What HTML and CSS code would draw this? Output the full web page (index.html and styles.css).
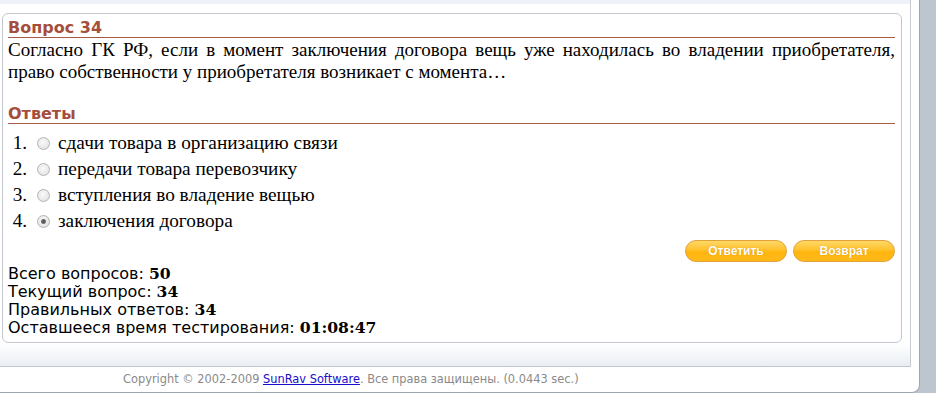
FILE: index.html
```html
<!DOCTYPE html>
<html lang="ru">
<head>
    <meta charset="UTF-8">
    <title>Тестирование</title>
    <link rel="stylesheet" href="styles.css">
</head>
<body>
    <div class="page">
        <div class="panel">
            <div class="card">
                <h2 class="title">Вопрос 34</h2>
                <p class="question">Согласно ГК РФ, если в момент заключения договора вещь уже находилась во владении приобретателя, право собственности у приобретателя возникает с момента…</p>

                <h2 class="title answers-title">Ответы</h2>
                <ol class="answers">
                    <li><input type="radio" name="answer" id="a1"><label for="a1">сдачи товара в организацию связи</label></li>
                    <li><input type="radio" name="answer" id="a2"><label for="a2">передачи товара перевозчику</label></li>
                    <li><input type="radio" name="answer" id="a3"><label for="a3">вступления во владение вещью</label></li>
                    <li><input type="radio" name="answer" id="a4" checked><label for="a4">заключения договора</label></li>
                </ol>

                <div class="buttons">
                    <button class="btn">Ответить</button>
                    <button class="btn">Возврат</button>
                </div>

                <div class="stats">
                    <div>Всего вопросов: <b>50</b></div>
                    <div>Текущий вопрос: <b>34</b></div>
                    <div>Правильных ответов: <b>34</b></div>
                    <div>Оставшееся время тестирования: <b>01:08:47</b></div>
                </div>
            </div>
        </div>
        <div class="footer">
            Copyright © 2002-2009 <a href="#">SunRav Software</a>. Все права защищены. (0.0443 sec.)
        </div>
    </div>
</body>
</html>
```

FILE: styles.css
```css
body {
    margin: 0;
    background-color: #bdc5ce;
    font-family: "DejaVu Sans", Verdana, sans-serif;
}

.page {
    width: 919px;
    height: 392px;
    background: #fff;
    border-right: 1px solid #9ea6b0;
    border-bottom: 1px solid #9ea6b0;
    border-bottom-right-radius: 8px;
}

.panel {
    width: 910px;
    padding-top: 13px;
    padding-bottom: 23px;
    border-right: 1px solid #c7ccd3;
    border-bottom: 1px solid #c0c5cc;
    background:
        linear-gradient(#eef1f7, #eef1f7) top / 100% 4px no-repeat,
        linear-gradient(#fff, #eaeef4) bottom / 100% 23px no-repeat,
        #fff;
}

.card {
    width: 887px;
    margin-left: 2px;
    padding: 0 6px 5px 5px;
    border: 1px solid #c3c7ce;
    border-radius: 6px;
    background: #fff;
}

.title {
    margin: 5px 0 0;
    font-size: 16px;
    line-height: 18px;
    font-weight: bold;
    color: #a54e3b;
    border-bottom: 1px solid #a95a45;
}

.answers-title {
    margin-top: 22px;
}

.question {
    margin: 1px 0 0;
    font-family: "Liberation Serif", "Times New Roman", serif;
    font-size: 19px;
    line-height: 22px;
    text-align: justify;
    color: #000;
}

.answers {
    margin: 6px 0 0;
    padding-left: 24px;
    font-family: "Liberation Serif", "Times New Roman", serif;
    font-size: 19.3px;
}

.answers li {
    height: 26px;
    line-height: 26px;
}

.answers input {
    appearance: none;
    width: 13px;
    height: 13px;
    margin: 0 8px 0 5px;
    vertical-align: -1px;
    border: 1px solid #b4b4b4;
    border-radius: 50%;
    background: radial-gradient(circle at 45% 40%, #fafafa, #dcdcdc);
}

.answers input:checked {
    background:
        radial-gradient(circle, #555 0, #6a6a6a 2px, transparent 3px),
        radial-gradient(circle at 45% 40%, #fafafa, #dcdcdc);
}

.buttons {
    display: flex;
    justify-content: flex-end;
    gap: 6px;
    margin-top: 6px;
}

.btn {
    width: 102px;
    height: 22px;
    padding: 0;
    border: 1px solid #e3a13a;
    border-radius: 11px;
    background: linear-gradient(#ffd867 0, #ffc12c 45%, #ffb50f 55%, #ffba1a 100%);
    color: #fff;
    font-family: "Liberation Sans", Arial, sans-serif;
    font-size: 12px;
    font-weight: bold;
    text-shadow: 0 0 1px #c98400;
    cursor: pointer;
}

.stats {
    margin-top: 3px;
    font-size: 16px;
    line-height: 18px;
    color: #000;
}

.stats b {
    font-family: "DejaVu Serif", Georgia, serif;
    font-size: 15.6px;
}

.footer {
    height: 24px;
    line-height: 24px;
    padding-left: 123px;
    font-size: 11.4px;
    color: #8a8a8a;
}

.footer a {
    color: #1a0dcc;
}
```
